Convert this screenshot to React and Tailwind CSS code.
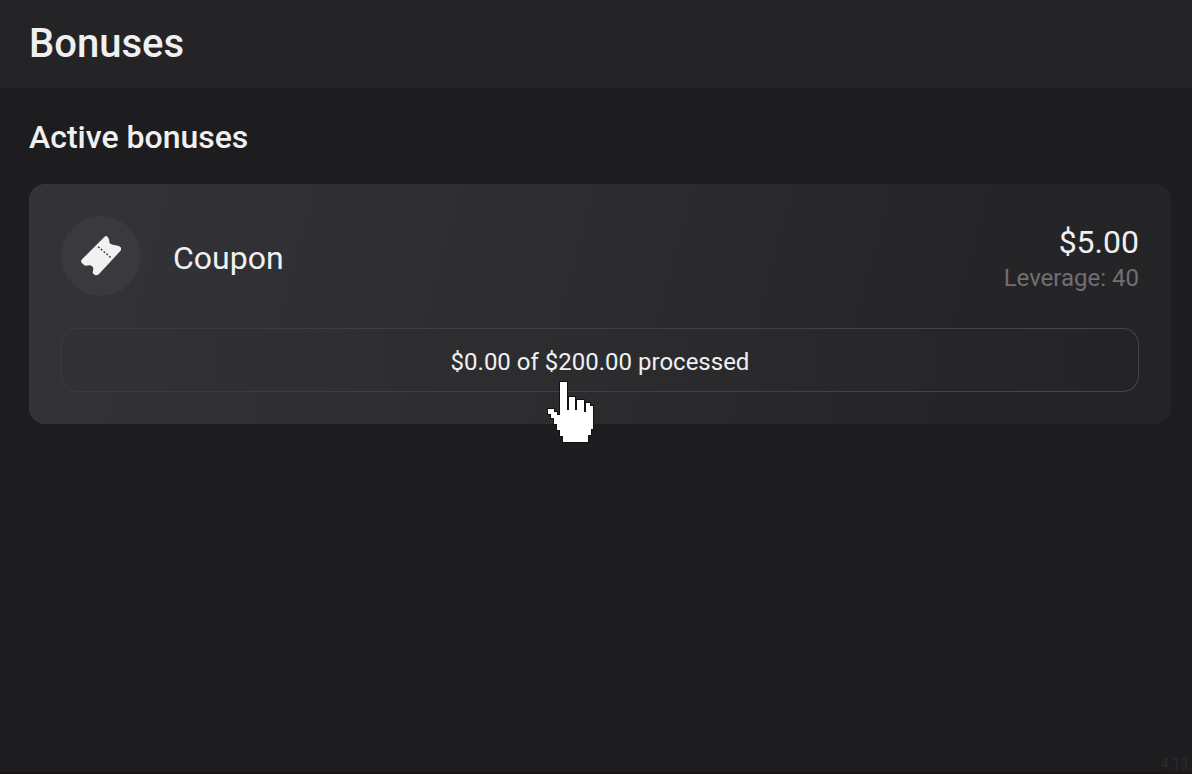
function TicketIcon() {
  return (
    <svg viewBox="0 0 120 120" className="size-10" aria-hidden="true">
      <path
        fill="#f1f1f2"
        d="M70 3q6-6 10 0l5 9q-3 13 14 15l12 2q6 2 9 6 2 5-2 10L54 114q-6 6-12 3-5-3-7-7l2-13q-3-9-12-9l-12 1Q5 86 1 79q-2-4 2-9Z"
      />
      <path d="M51 32L92 67" stroke="#343338" strokeWidth="4" strokeDasharray="6 5" />
    </svg>
  );
}

function HandPointer() {
  return (
    <svg
      viewBox="0 0 144 192"
      className="pointer-events-none absolute top-full left-1/2 -mt-3 -ml-[54px] h-16 w-12"
      shapeRendering="crispEdges"
      aria-hidden="true"
    >
      <path
        fill="#fff"
        stroke="#111"
        strokeWidth="6"
        paintOrder="stroke"
        d="M42 6H63V51H87V60H114V69H132V78H141V147H135V165H126V186H51V168H42V150H33V132H24V114H15V102H6V87H24V96H33V105H42Z"
      />
      <path d="M66 48V90M90 57V90M117 66V96" stroke="#111" strokeWidth="6" />
    </svg>
  );
}

function BonusCard({ name, amount, leverage, progress }) {
  return (
    <article className="rounded-2xl bg-[linear-gradient(105deg,#343338_0%,#2d2d30_45%,#252527_80%,#242426_100%)] p-8">
      <div className="flex h-20 items-center gap-8">
        <div className="flex size-20 items-center justify-center rounded-full bg-[#3a393e]">
          <TicketIcon />
        </div>
        <h3 className="flex-1 pt-1 text-[32px] leading-10">{name}</h3>
        <div className="pt-1 text-right">
          <p className="text-[32px] leading-10">{amount}</p>
          <p className="text-2xl text-[#707073]">Leverage: {leverage}</p>
        </div>
      </div>
      <div className="relative mt-8 h-16 rounded-2xl bg-linear-to-r from-[#3b3a3f] to-[#454547] p-px">
        <div className="flex h-full items-center justify-center rounded-[15px] bg-linear-to-r from-[#323135] via-[#2c2c2f] to-[#242426] pt-1 text-2xl">
          <p>{progress}</p>
        </div>
        <HandPointer />
      </div>
    </article>
  );
}

export default function App() {
  return (
    <div className="flex min-h-screen flex-col border-b-2 border-[#1a1417] bg-[#1d1d1f] font-['Roboto',sans-serif] text-[#f0f0f1]">
      <header className="bg-[#242426] px-[29px] py-5">
        <h1 className="text-[40px] leading-12 font-medium">Bonuses</h1>
      </header>
      <main className="flex-1 pt-[29px] pr-[21px] pl-[29px]">
        <h2 className="mb-[27px] text-[32px] leading-10 font-medium">Active bonuses</h2>
        <BonusCard
          name="Coupon"
          amount="$5.00"
          leverage={40}
          progress="$0.00 of $200.00 processed"
        />
      </main>
      <footer className="px-1 text-right text-sm leading-4 text-[#2b2b2d]">4.13</footer>
    </div>
  );
}
